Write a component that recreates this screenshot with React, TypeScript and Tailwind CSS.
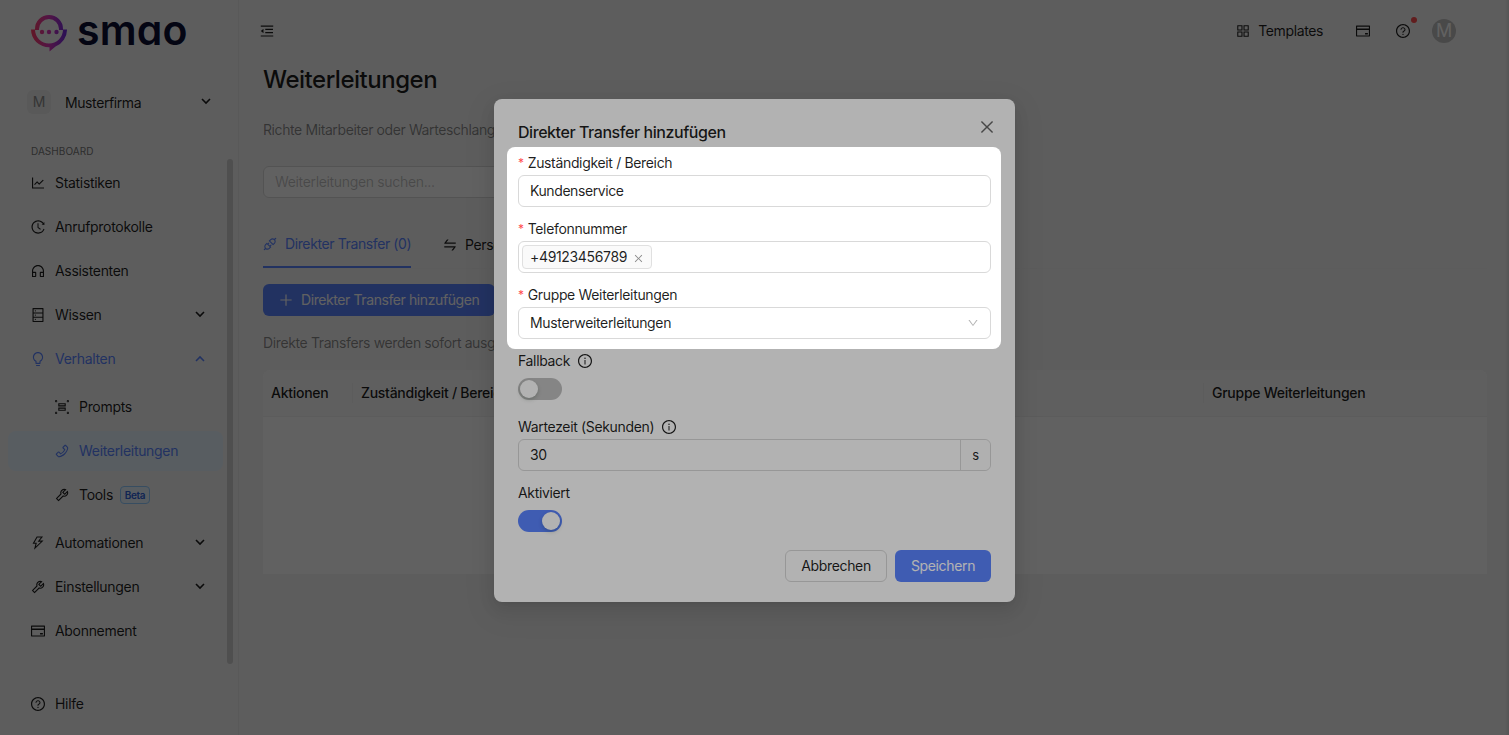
import type { ReactNode } from 'react';
import type { IconType } from 'react-icons';
import {
  AiOutlineApi,
  AiOutlineAppstore,
  AiOutlineBulb,
  AiOutlineClose,
  AiOutlineCreditCard,
  AiOutlineCustomerService,
  AiOutlineDatabase,
  AiOutlineDown,
  AiOutlineHistory,
  AiOutlineInfoCircle,
  AiOutlineLineChart,
  AiOutlineMenuFold,
  AiOutlinePhone,
  AiOutlinePlus,
  AiOutlineQuestionCircle,
  AiOutlineSwap,
  AiOutlineThunderbolt,
  AiOutlineTool,
  AiOutlineUngroup,
} from 'react-icons/ai';

function Chevron({ up = false }: { up?: boolean }) {
  return (
    <svg width="10" height="10" viewBox="0 0 10 10" fill="none" stroke="currentColor" strokeWidth="1.6" className={up ? 'rotate-180' : '-mt-0.5'}>
      <path d="M1 3l4 4 4-4" />
    </svg>
  );
}

function Logo() {
  return (
    <div className="flex h-9 items-start pl-[31px]">
      <svg width="36" height="37" viewBox="0 0 36 37" className="shrink-0">
        <defs>
          <linearGradient id="smao" x1="0" y1="0" x2="36" y2="0" gradientUnits="userSpaceOnUse">
            <stop offset="0" stopColor="#ff4060" />
            <stop offset="0.5" stopColor="#d838b8" />
            <stop offset="1" stopColor="#6a2be0" />
          </linearGradient>
        </defs>
        <path d="M6 15V14a12 12 0 0 1 24 0v1" fill="none" stroke="url(#smao)" strokeWidth="4" />
        <path d="M0 14.5h4a14 14 0 0 0 28 0h4a18 18 0 0 1-11.5 17L18.5 36.5V32.3A18 18 0 0 1 0 14.5z" fill="url(#smao)" />
        <circle cx="11" cy="17" r="2.2" fill="url(#smao)" />
        <circle cx="18" cy="17" r="2.2" fill="#d838b8" />
        <circle cx="25.5" cy="17" r="2.2" fill="url(#smao)" />
      </svg>
      <span className="-mt-[3px] ml-[10px] text-[41px] leading-9 font-semibold tracking-[0.2px] text-[#0b1033] [font-feature-settings:'cv11']">smao</span>
    </div>
  );
}

type NavItemProps = {
  icon: IconType;
  label: string;
  arrow?: 'up' | 'down';
  nested?: boolean;
  active?: boolean;
  blue?: boolean;
  badge?: string;
};

function NavItem({ icon: Icon, label, arrow, nested, active, blue, badge }: NavItemProps) {
  return (
    <div
      className={`mx-2 flex h-10 w-[215px] items-center rounded-lg pr-[18px] ${nested ? 'pl-[46px]' : 'pl-[22px]'} ${
        active ? 'bg-[#e6f4ff]' : ''
      } ${blue || active ? 'text-[#5b84ff]' : 'text-black/88'}`}
    >
      <Icon size={16} className="shrink-0" />
      <span className="ml-[9px]">{label}</span>
      {badge && (
        <span className="ml-[7px] flex h-[18px] w-[30px] items-center justify-center rounded border border-[#91caff] bg-[#e6f4ff] text-[10px] font-semibold text-[#2f62d9]">
          {badge}
        </span>
      )}
      {arrow && (
        <span className="ml-auto">
          <Chevron up={arrow === 'up'} />
        </span>
      )}
    </div>
  );
}

function Sidebar() {
  return (
    <aside className="flex h-full w-[239px] shrink-0 flex-col border-r border-[#e9e9e9] pt-[15px] tracking-[-0.31px]">
      <Logo />
      <div className="mt-[39px] flex h-6 items-center pr-[27px] pl-[27px]">
        <span className="flex size-6 items-center justify-center rounded-md bg-[#e9e9e9] text-[#8c8c8c]">M</span>
        <span className="ml-[14px] pt-px tracking-[-0.4px]">Musterfirma</span>
        <span className="ml-auto">
          <Chevron />
        </span>
      </div>
      <div className="mt-[29px] pl-[31px] text-[10px] leading-4 tracking-[0.05px] text-[#777]">DASHBOARD</div>
      <div className="flex h-[505px] justify-between pr-[5px]">
        <nav className="flex flex-col gap-1 pt-1">
          <NavItem icon={AiOutlineLineChart} label="Statistiken" />
          <NavItem icon={AiOutlineHistory} label="Anrufprotokolle" />
          <NavItem icon={AiOutlineCustomerService} label="Assistenten" />
          <NavItem icon={AiOutlineDatabase} label="Wissen" arrow="down" />
          <NavItem icon={AiOutlineBulb} label="Verhalten" arrow="up" blue />
          <div className="flex flex-col gap-1 py-1">
            <NavItem icon={AiOutlineUngroup} label="Prompts" nested />
            <NavItem icon={AiOutlinePhone} label="Weiterleitungen" nested active />
            <NavItem icon={AiOutlineTool} label="Tools" nested badge="Beta" />
          </div>
          <NavItem icon={AiOutlineThunderbolt} label="Automationen" arrow="down" />
          <NavItem icon={AiOutlineTool} label="Einstellungen" arrow="down" />
          <NavItem icon={AiOutlineCreditCard} label="Abonnement" />
        </nav>
        <div className="-ml-2 w-1.5 shrink-0 rounded-full bg-[#cfcfcf]" />
      </div>
      <div className="mt-5">
        <NavItem icon={AiOutlineQuestionCircle} label="Hilfe" />
      </div>
    </aside>
  );
}

function TopBar() {
  return (
    <header className="flex h-[62px] items-center justify-between pr-[53px] pl-5">
      <AiOutlineMenuFold size={16} />
      <div className="flex items-center">
        <AiOutlineAppstore size={16} />
        <span className="ml-[7px] tracking-[-0.38px]">Templates</span>
        <AiOutlineCreditCard size={16} className="ml-8" />
        <span className="relative ml-6">
          <AiOutlineQuestionCircle size={16} />
          <span className="absolute -top-[6px] -right-[6px] size-1.5 rounded-full bg-[#ff4d4f]" />
        </span>
        <span className="ml-[21px] flex size-6 items-center justify-center rounded-full bg-[#bfbfbf] text-lg text-white">M</span>
      </div>
    </header>
  );
}

function Main() {
  return (
    <main className="min-w-0 flex-1">
      <TopBar />
      <div className="pr-[22px] pl-6">
        <h1 className="text-2xl leading-9 font-medium tracking-[-0.48px]">Weiterleitungen</h1>
        <p className="mt-[21px] leading-[22px] tracking-[-0.4px] whitespace-nowrap text-black/45">
          Richte Mitarbeiter oder Warteschlangen ein
        </p>
        <div className="mt-[25px] flex h-8 w-[400px] items-center rounded-md border border-[#d9d9d9] bg-white px-[11px] text-black/25">
          Weiterleitungen suchen...
        </div>
        <div className="mt-6 flex gap-8 border-b border-[#f0f0f0]">
          <div className="-mb-px flex h-[46px] w-[148px] items-center border-b-2 border-[#5b84ff] tracking-[-0.39px] whitespace-nowrap text-[#5b84ff]">
            <AiOutlineApi size={16} className="mr-[7px] -ml-px shrink-0" />
            Direkter Transfer (0)
          </div>
          <div className="flex h-[46px] items-center whitespace-nowrap">
            <AiOutlineSwap size={16} className="mr-[7px] -ml-px" />
            Personen (0)
          </div>
        </div>
        <button className="mt-[15px] flex h-8 w-[232px] items-center rounded-md bg-[#5b84ff] pl-[15px] tracking-[-0.41px] whitespace-nowrap text-white">
          <AiOutlinePlus size={16} className="mr-[7px]" />
          Direkter Transfer hinzufügen
        </button>
        <p className="mt-4 leading-[22px] tracking-[-0.38px] whitespace-nowrap text-black/45">Direkte Transfers werden sofort ausgeführt</p>
        <div className="mt-4 h-[204px] rounded-t-lg bg-white">
          <div className="flex h-[47px] items-center rounded-t-lg border-b border-[#f0f0f0] bg-[#fafafa] font-medium tracking-[-0.27px]">
            <div className="w-[90px] border-r border-[#f0f0f0] pl-2">Aktionen</div>
            <div className="w-[851px] border-r border-[#f0f0f0] pl-2">Zuständigkeit / Bereich</div>
            <div className="pl-2">Gruppe Weiterleitungen</div>
          </div>
        </div>
      </div>
    </main>
  );
}

type FieldProps = { label: string; required?: boolean; info?: boolean; children: ReactNode };

function Field({ label, required, info, children }: FieldProps) {
  return (
    <div className="h-[66px]">
      <div className="flex h-[25px] items-center">
        {required && <span className="mr-[4px] h-[22px] text-[12px] leading-[22px] text-[#ff4d4f]">*</span>}
        <span>{label}</span>
        {info && <AiOutlineInfoCircle size={16} className="ml-[7px]" />}
      </div>
      <div className="flex h-8 items-center">{children}</div>
    </div>
  );
}

function Toggle({ on = false }: { on?: boolean }) {
  return (
    <span className={`flex h-[22px] w-11 items-center rounded-full p-0.5 ${on ? 'justify-end bg-[#5b84ff]' : 'bg-[#bfbfbf]'}`}>
      <span className="size-[18px] rounded-full bg-white shadow-[0_2px_4px_rgba(0,35,11,0.2)]" />
    </span>
  );
}

function TransferModal() {
  return (
    <div className="relative h-[503px] w-[521px] rounded-lg bg-white px-6 pt-5 shadow-[0_6px_16px_0_rgba(0,0,0,0.08),0_3px_6px_-4px_rgba(0,0,0,0.12),0_9px_28px_8px_rgba(0,0,0,0.05)]">
      <div className="flex h-[31px] items-start justify-between">
        <h2 className="text-base leading-[26px] font-medium tracking-[-0.44px]">Direkter Transfer hinzufügen</h2>
        <AiOutlineClose size={18} className="-mt-px -mr-[5px] text-black/60" />
      </div>
      <Field label="Zuständigkeit / Bereich" required>
        <div className="flex h-8 flex-1 items-center rounded-md border border-[#d9d9d9] px-[11px] tracking-[-0.42px]">Kundenservice</div>
      </Field>
      <Field label="Telefonnummer" required>
        <div className="flex h-8 flex-1 items-center rounded-md border border-[#d9d9d9] px-[3px]">
          <span className="flex h-6 w-[130px] items-center justify-between rounded border border-[#e0e0e0] bg-[#fafafa] px-[7px]">
            +49123456789
            <AiOutlineClose size={11} className="mt-[3px] text-black/45" />
          </span>
        </div>
      </Field>
      <Field label="Gruppe Weiterleitungen" required>
        <div className="flex h-8 flex-1 items-center justify-between rounded-md border border-[#d9d9d9] px-[11px]">
          Musterweiterleitungen
          <AiOutlineDown size={12} className="text-black/30" />
        </div>
      </Field>
      <Field label="Fallback" info>
        <Toggle />
      </Field>
      <Field label="Wartezeit (Sekunden)" info>
        <div className="flex h-8 flex-1 items-center rounded-md border border-[#d9d9d9] pl-[11px]">
          <span className="flex-1">30</span>
          <span className="flex h-full w-[30px] items-center justify-center rounded-r-md border-l border-[#d9d9d9] bg-[#fdfdfd] text-[13px]">
            s
          </span>
        </div>
      </Field>
      <Field label="Aktiviert">
        <Toggle on />
      </Field>
      <div className="mt-1 flex justify-end gap-2">
        <button className="h-8 w-[102px] rounded-md border border-[#d9d9d9]">Abbrechen</button>
        <button className="h-8 w-24 rounded-md bg-[#5b84ff] text-white">Speichern</button>
      </div>
      {/* highlighted step of the tour, dims everything else */}
      <div className="absolute top-12 left-[13px] h-[202px] w-[494px] rounded-lg shadow-[0_0_0_2000px_rgba(0,0,0,0.3)]" />
    </div>
  );
}

export default function App() {
  return (
    <div className="relative h-[735px] w-[1509px] overflow-hidden bg-[#f5f5f5] font-['Inter',sans-serif] text-sm tracking-[-0.34px] text-black/88">
      <div className="flex h-full">
        <Sidebar />
        <Main />
        <div className="-ml-1 w-1 shrink-0 bg-linear-to-r from-[#f5f5f5] to-[#dedede]" />
      </div>
      <div className="absolute inset-0 flex items-start justify-center overflow-hidden bg-black/45 pt-[99px]">
        <TransferModal />
      </div>
    </div>
  );
}
